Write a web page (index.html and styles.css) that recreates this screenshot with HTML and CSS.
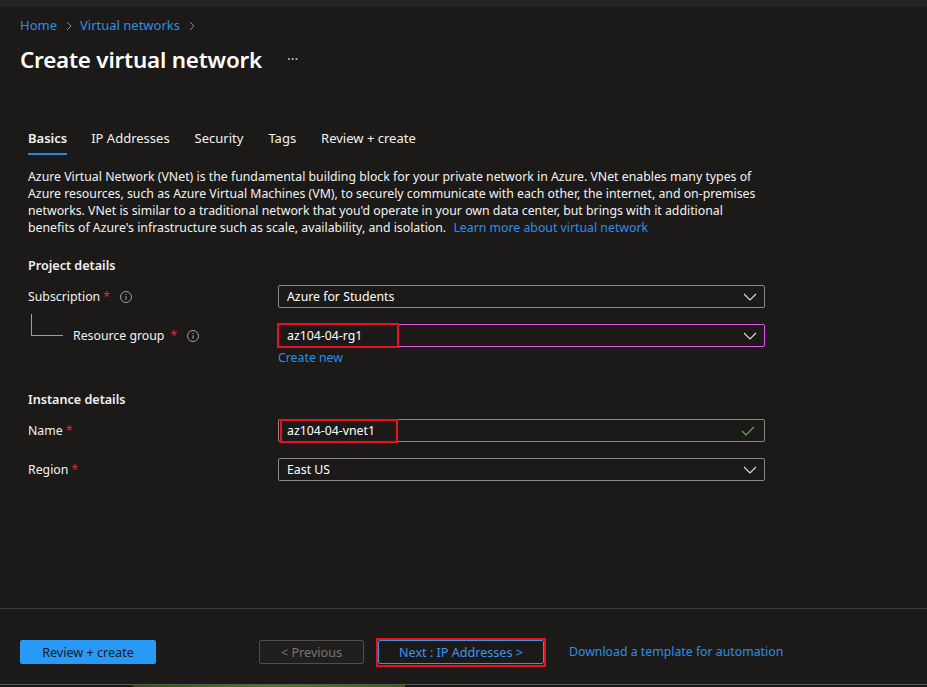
FILE: index.html
```html
<!DOCTYPE html>
<html lang="en">
<head>
<meta charset="utf-8">
<title>Create virtual network</title>
<link rel="stylesheet" href="styles.css">
</head>
<body>
<div class="topbar"></div>
<main class="page">
  <header class="header">
    <nav class="breadcrumb">
      <a class="crumb">Home</a>
      <svg class="sep" viewBox="0 0 8 12" width="8" height="12"><path d="M2 2l4 4-4 4" fill="none" stroke="#8a8886" stroke-width="1"/></svg>
      <a class="crumb">Virtual networks</a>
      <svg class="sep" viewBox="0 0 8 12" width="8" height="12"><path d="M2 2l4 4-4 4" fill="none" stroke="#8a8886" stroke-width="1"/></svg>
    </nav>
    <div class="title-row">
      <h1 class="title">Create virtual network</h1>
      <span class="more">···</span>
    </div>
  </header>

  <div class="tabs">
    <span class="tab active">Basics</span>
    <span class="tab">IP Addresses</span>
    <span class="tab">Security</span>
    <span class="tab">Tags</span>
    <span class="tab">Review + create</span>
  </div>

  <section class="content">
    <p class="desc">Azure Virtual Network (VNet) is the fundamental building block for your private network in Azure. VNet enables many types of<br>Azure resources, such as Azure Virtual Machines (VM), to securely communicate with each other, the internet, and on-premises<br>networks. VNet is similar to a traditional network that you'd operate in your own data center, but brings with it additional<br>benefits of Azure's infrastructure such as scale, availability, and isolation. <a class="link">Learn more about virtual network</a></p>

    <h2 class="section-title">Project details</h2>

    <div class="row">
      <div class="label">Subscription <span class="req">*</span>
        <svg class="info" viewBox="0 0 14 14" width="14" height="14"><circle cx="7" cy="7" r="5.5" fill="none" stroke="#a19f9d" stroke-width="1"/><path d="M7 6.2v3.6" stroke="#a19f9d" stroke-width="1.1"/><circle cx="7" cy="4.6" r="0.7" fill="#a19f9d"/></svg>
      </div>
      <div class="field">
        <div class="select"><span>Azure for Students</span>
          <svg class="chev" viewBox="0 0 14 8" width="14" height="8"><path d="M1 1l6 6 6-6" fill="none" stroke="#e1dfdd" stroke-width="1.1"/></svg>
        </div>
      </div>
    </div>

    <div class="row row-rg">
      <div class="label label-sub">
        <span class="tree"></span>
        <span>Resource group <span class="req">*</span></span>
        <svg class="info" viewBox="0 0 14 14" width="14" height="14"><circle cx="7" cy="7" r="5.5" fill="none" stroke="#a19f9d" stroke-width="1"/><path d="M7 6.2v3.6" stroke="#a19f9d" stroke-width="1.1"/><circle cx="7" cy="4.6" r="0.7" fill="#a19f9d"/></svg>
      </div>
      <div class="field">
        <div class="select focus"><span>az104-04-rg1</span>
          <svg class="chev" viewBox="0 0 14 8" width="14" height="8"><path d="M1 1l6 6 6-6" fill="none" stroke="#e1dfdd" stroke-width="1.1"/></svg>
          <span class="mark mark-rg"></span>
        </div>
        <a class="link create-new">Create new</a>
      </div>
    </div>

    <h2 class="section-title instance">Instance details</h2>

    <div class="row row-name">
      <div class="label">Name <span class="req">*</span></div>
      <div class="field">
        <div class="select"><span>az104-04-vnet1</span>
          <svg class="check" viewBox="0 0 14 10" width="14" height="10"><path d="M1 5l4 4 8-8" fill="none" stroke="#6aa84f" stroke-width="1.2"/></svg>
          <span class="mark mark-name"></span>
        </div>
      </div>
    </div>

    <div class="row row-region">
      <div class="label">Region <span class="req">*</span></div>
      <div class="field">
        <div class="select"><span>East US</span>
          <svg class="chev" viewBox="0 0 14 8" width="14" height="8"><path d="M1 1l6 6 6-6" fill="none" stroke="#e1dfdd" stroke-width="1.1"/></svg>
        </div>
      </div>
    </div>
  </section>

  <footer class="footer">
    <button class="btn primary">Review + create</button>
    <button class="btn disabled">&lt; Previous</button>
    <button class="btn next">Next : IP Addresses &gt;<span class="mark mark-next"></span></button>
    <a class="link download">Download a template for automation</a>
  </footer>
</main>
<div class="bottom-strip"><span class="wallpaper"></span></div>
</body>
</html>
```

FILE: styles.css
```css
* { box-sizing: border-box; }

html, body {
  margin: 0;
  height: 100%;
}

body {
  background: #1b1a19;
  color: #f3f2f1;
  font-family: "Noto Sans", "Open Sans", sans-serif;
  font-size: 12.3px;
  display: flex;
  flex-direction: column;
  overflow: hidden;
}

.topbar {
  height: 7px;
  background: #252423;
  flex: none;
}

.page {
  flex: 1;
  display: flex;
  flex-direction: column;
}

.header {
  padding: 9px 0 0 20px;
}

.breadcrumb {
  display: flex;
  align-items: center;
  height: 18px;
}

.crumb {
  color: #2f8ee6;
  font-size: 13px;
}

.sep {
  margin: 1px 7px 0 8px;
}

.title-row {
  display: flex;
  align-items: center;
  margin-top: 10px;
  height: 30px;
}

.title {
  margin: 0;
  font-size: 22.4px;
  font-weight: 600;
  color: #ffffff;
  letter-spacing: -0.2px;
}

.more {
  margin-left: 25px;
  color: #c8c6c4;
  font-size: 14px;
  margin-top: -2px;
}

.tabs {
  display: flex;
  align-items: flex-start;
  padding-left: 28px;
  margin-top: 54px;
  height: 27px;
}

.tab {
  font-size: 13px;
  color: #f3f2f1;
  margin-right: 25px;
  position: relative;
  line-height: 20px;
}

.tab.active {
  font-weight: 600;
  margin-right: 24px;
}

.tab.active::after {
  content: "";
  position: absolute;
  left: 0;
  right: 0;
  bottom: -7px;
  height: 2px;
  background: #2b88d8;
}

.content {
  padding: 0 28px;
}

.desc {
  margin: 13px 0 0;
  white-space: nowrap;
  font-size: 12.3px;
  line-height: 17px;
  color: #f3f2f1;
}

.link {
  color: #2f8ee6;
}

.desc .link {
  margin-left: 4px;
}

.section-title {
  font-size: 12.6px;
  font-weight: 600;
  margin: 21px 0 0;
  line-height: 18px;
  color: #f3f2f1;
}

.section-title.instance {
  margin-top: 25px;
}

.row {
  display: grid;
  grid-template-columns: 250px 487px;
  margin-top: 10px;
}

.row-rg {
  margin-top: 16px;
}

.row-name {
  margin-top: 10px;
}

.row-region {
  margin-top: 16px;
}

.label {
  display: flex;
  align-items: center;
  height: 23px;
  color: #f3f2f1;
}

.req {
  color: #d13438;
  margin-left: 3px;
}

.info {
  margin-left: 9px;
}

.label-sub {
  padding-left: 3px;
}

.tree {
  width: 32px;
  height: 22px;
  margin-top: -21px;
  margin-right: 10px;
  border-left: 1px solid #a19f9d;
  border-bottom: 1px solid #a19f9d;
}

.field {
  display: flex;
  flex-direction: column;
}

.select {
  position: relative;
  height: 23px;
  border: 1px solid #8a8886;
  border-radius: 2px;
  display: flex;
  align-items: center;
  justify-content: space-between;
  padding: 0 7px 0 8px;
  color: #ffffff;
}

.select.focus {
  border-color: #dd55e8;
}

.chev {
  margin-top: 1px;
}

.check {
  margin-right: 2px;
}

.create-new {
  margin-top: 2px;
  line-height: 17px;
}

.mark {
  position: absolute;
  border: 2px solid #e81123;
  pointer-events: none;
}

.mark-rg {
  left: -2px;
  top: -2px;
  width: 122px;
  height: 25px;
}

.mark-name {
  left: 1px;
  top: -1px;
  width: 118px;
  height: 24px;
}

.footer {
  margin-top: auto;
  border-top: 1px solid #3b3a39;
  height: 76px;
  display: flex;
  align-items: flex-start;
  padding: 31px 0 0 20px;
}

.btn {
  font-family: "Noto Sans", "Open Sans", sans-serif;
  font-size: 12.6px;
  height: 24px;
  border-radius: 2px;
  padding: 0;
  cursor: pointer;
}

.primary {
  width: 136px;
  background: #2899f5;
  border: 1px solid #2899f5;
  color: #1b1a19;
}

.disabled {
  width: 105px;
  margin-left: 103px;
  background: #201f1e;
  border: 1px solid #4f4e4d;
  color: #797775;
}

.next {
  position: relative;
  width: 166px;
  margin-left: 14px;
  background: #1b1a19;
  border: 1px solid #3a96dd;
  color: #3a96f0;
}

.mark-next {
  left: -3px;
  top: -3px;
  right: -3px;
  bottom: -4px;
}

.download {
  margin-left: 25px;
  line-height: 24px;
  font-size: 12.3px;
}

.bottom-strip {
  flex: none;
  height: 3px;
  border-top: 1px solid #5a5958;
  background: #1b1a19;
  position: relative;
}

.wallpaper {
  position: absolute;
  left: 133px;
  top: 0;
  width: 272px;
  height: 2px;
  background: linear-gradient(90deg, #2f4a14, #4f7d1c, #3a5e16);
}
```
